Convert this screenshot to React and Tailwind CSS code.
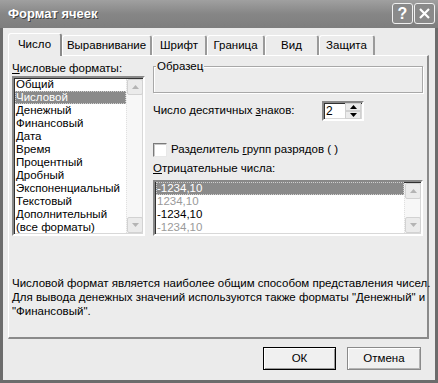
import React from "react";

function Tri({ down, color = "#b4b4b4", w = 7, h = 4 }) {
  return (
    <svg width={w} height={h} viewBox={`0 0 ${w} ${h}`}>
      <path d={down ? `M0 0H${w}L${w / 2} ${h}Z` : `M0 ${h}H${w}L${w / 2} 0Z`} fill={color} />
    </svg>
  );
}

function ScrollBtn({ down }) {
  return (
    <div className="w-[16px] h-[16px] bg-[#ebebeb] border border-[#d2d2d2] rounded-[2px] flex items-center justify-center">
      <Tri down={down} />
    </div>
  );
}

function ListBox({ items, className }) {
  return (
    <div
      className={`flex bg-white border-2 border-t-[#888888] border-l-[#888888] border-b-white border-r-white shadow-[inset_1px_1px_0_#303030,inset_-1px_-1px_0_#d8d8d8] ${className}`}
    >
      <div className="flex-1 flex flex-col pl-[1px] overflow-hidden">
        {items.map((it, i) => (
          <div
            key={i}
            className={`h-[13px] leading-[13px] pl-[1px] whitespace-nowrap ${
              it.sel ? "bg-[#8a8a8a] text-white outline-1 outline-dotted outline-[#cfcfcf] -outline-offset-1" : ""
            } ${it.gray ? "text-[#9a9a9a]" : ""}`}
          >
            {it.t}
          </div>
        ))}
      </div>
      <div className="w-[16px] bg-[#f7f7f7] flex flex-col justify-between mr-[1px] my-[1px] border-l border-dotted border-[#e0e0e0]">
        <ScrollBtn />
        <ScrollBtn down />
      </div>
    </div>
  );
}

const tabs = [
  { t: "Выравнивание", w: 90 },
  { t: "Шрифт", w: 55 },
  { t: "Граница", w: 58 },
  { t: "Вид", w: 54 },
  { t: "Защита", w: 56 },
];

export default function App() {
  const formats = [
    "Общий",
    "Числовой",
    "Денежный",
    "Финансовый",
    "Дата",
    "Время",
    "Процентный",
    "Дробный",
    "Экспоненциальный",
    "Текстовый",
    "Дополнительный",
    "(все форматы)",
  ].map((t) => ({ t, sel: t === "Числовой" }));

  const neg = [
    { t: "-1234,10", sel: true },
    { t: "1234,10", gray: true },
    { t: "-1234,10" },
    { t: "-1234,10", gray: true },
  ];

  return (
    <div className="w-[438px] h-[383px] flex flex-col bg-[#6c6c6c] font-['Liberation_Sans',Arial,sans-serif] text-[11.5px] text-black select-none">
      {/* Title bar */}
      <div className="h-[28px] flex items-center pl-[8px] pr-[3px] bg-gradient-to-b from-[#a0a0a0] via-[#868686] to-[#7e7e7e] shrink-0">
        <div className="flex-1 text-white font-bold text-[13px] [text-shadow:1px_1px_0_#404040]">
          Формат ячеек
        </div>
        <div className="flex gap-[1px] mb-[1px]">
          <div className="w-[21px] h-[21px] rounded-[3px] border border-[#f0f0f0] bg-[#8a8a8a] flex items-center justify-center text-white text-[16px] font-bold leading-none">
            ?
          </div>
          <div className="w-[21px] h-[21px] rounded-[3px] border border-[#f0f0f0] bg-[#8a8a8a] flex items-center justify-center">
            <svg width="13" height="13" viewBox="0 0 13 13">
              <path d="M2 2L11 11M11 2L2 11" stroke="white" strokeWidth="2.2" />
            </svg>
          </div>
        </div>
      </div>

      {/* Body */}
      <div className="flex-1 bg-[#ebebeb] mx-[3px] mb-[3px] flex flex-col">
        {/* Tabs */}
        <div className="ml-[5px] mt-[5px] h-[22px] flex items-end relative z-10">
          <div className="w-[54px] h-[23px] -mb-[1px] bg-[#ececec] border-t border-l border-white border-r-2 border-r-[#8a8a8a] rounded-t-[3px] flex items-center justify-center pb-[1px]">
            Число
          </div>
          {tabs.map((tb) => (
            <div
              key={tb.t}
              style={{ width: tb.w }}
              className="h-[20px] bg-[#ececec] border-t border-l border-white border-r-2 border-r-[#9a9a9a] rounded-t-[3px] flex items-center justify-center"
            >
              {tb.t}
            </div>
          ))}
        </div>

        {/* Panel */}
        <div className="ml-[5px] w-[421px] h-[284px] bg-[#ececec] border-t border-l border-white border-r-2 border-b-2 border-r-[#8a8a8a] border-b-[#8a8a8a] flex flex-col">
          <div className="flex pl-[3px] pt-[5px]">
            {/* Left column */}
            <div className="w-[133px] flex flex-col">
              <div className="h-[13px] leading-[13px] mt-[1px] whitespace-nowrap">
                <span className="underline">Ч</span>исловые форматы:
              </div>
              <ListBox items={formats} className="mt-[1px] h-[160px]" />
            </div>

            {/* Right column */}
            <div className="ml-[8px] w-[270px] flex flex-col">
              <div className="mt-[5px] h-[27px] border border-[#a8a8a8] shadow-[1px_1px_0_#ffffff,inset_1px_1px_0_#ffffff] relative">
                <span className="absolute -top-[7px] left-[2px] px-[1px] bg-[#ececec] leading-[13px]">
                  Образец
                </span>
              </div>

              <div className="mt-[8px] h-[20px] flex items-center">
                <div className="w-[169px] whitespace-nowrap">
                  Число десятичных <span className="underline">з</span>наков:
                </div>
                <div className="w-[42px] h-[20px] bg-white border-2 border-t-[#888888] border-l-[#888888] border-b-white border-r-white shadow-[inset_1px_1px_0_#303030,inset_-1px_-1px_0_#d8d8d8] flex items-center">
                  <div className="flex-1 pl-[2px] leading-[14px] text-[12px]">2</div>
                  <div className="w-[16px] h-[16px] flex flex-col mr-[1px]">
                    <div className="h-[8px] bg-[#ebebeb] border border-[#d0d0d0] flex items-center justify-center">
                      <Tri color="#000" w={7} h={4} />
                    </div>
                    <div className="h-[8px] bg-[#ebebeb] border border-[#d0d0d0] flex items-center justify-center">
                      <Tri down color="#000" w={7} h={4} />
                    </div>
                  </div>
                </div>
              </div>

              <div className="mt-[22px] h-[14px] flex items-center">
                <div className="w-[14px] h-[14px] bg-white border border-t-[#7a7a7a] border-l-[#7a7a7a] border-b-[#e8e8e8] border-r-[#e8e8e8] shadow-[inset_1px_1px_0_#c8c8c8]" />
                <div className="ml-[4px] whitespace-nowrap">
                  Разделитель <span className="underline">г</span>рупп разрядов ( )
                </div>
              </div>

              <div className="mt-[5px] h-[13px] leading-[13px] whitespace-nowrap">
                <span className="underline">О</span>трицательные числа:
              </div>

              <ListBox items={neg} className="mt-[5px] h-[56px] w-[270px]" />
            </div>
          </div>

          <div className="mt-[40px] pl-[3px] leading-[14px] whitespace-nowrap">
            Числовой формат является наиболее общим способом представления чисел.
            <br />
            Для вывода денежных значений используются также форматы "Денежный" и
            <br />
            "Финансовый".
          </div>
        </div>

        {/* Buttons */}
        <div className="mt-[8px] flex justify-end pr-[14px] gap-[11px]">
          <div className="w-[73px] h-[23px] border border-black bg-[#f0f0f0] shadow-[inset_1px_1px_0_#ffffff,inset_-1px_-1px_0_#9a9a9a] flex items-center justify-center">
            ОК
          </div>
          <div className="w-[74px] h-[23px] border border-[#8a8a8a] bg-[#f0f0f0] shadow-[inset_1px_1px_0_#ffffff,inset_-1px_-1px_0_#b4b4b4] flex items-center justify-center">
            Отмена
          </div>
        </div>
      </div>
    </div>
  );
}
